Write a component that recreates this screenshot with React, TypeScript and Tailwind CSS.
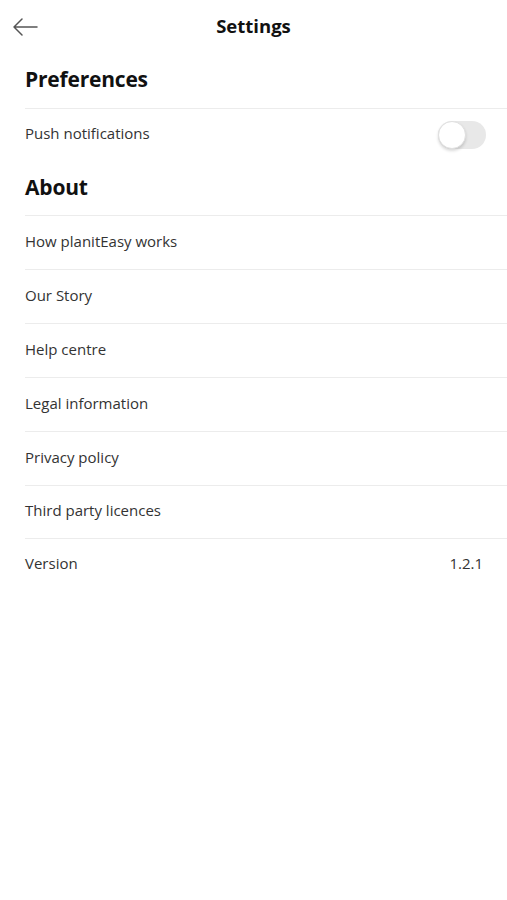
import React, { useState } from 'react';

const aboutItems = [
  'How planitEasy works',
  'Our Story',
  'Help centre',
  'Legal information',
  'Privacy policy',
  'Third party licences',
];

const Toggle = ({ on, onChange }: { on: boolean; onChange: () => void }) => (
  <button
    onClick={onChange}
    className={`relative w-[48px] h-[28px] rounded-full transition-colors ${on ? 'bg-[#4cd964]' : 'bg-[#e8e8e8]'}`}
  >
    <span
      className={`absolute top-0 w-[28px] h-[28px] rounded-full bg-white border border-[#e0e0e0] shadow-[0_2px_3px_rgba(0,0,0,0.15)] transition-all ${on ? 'left-[20px]' : 'left-0'}`}
    />
  </button>
);

export default function App() {
  const [push, setPush] = useState(false);

  return (
    <div className="min-h-screen bg-white text-[#333] font-['Open_Sans','Lato',sans-serif]">
      {/* Header */}
      <div className="relative h-[53px] flex items-center justify-center">
        <button className="absolute left-[12px] top-[16px] text-[#555]">
          <svg width="26" height="22" viewBox="0 0 26 22" fill="none" stroke="currentColor" strokeWidth="1.5" strokeLinecap="round" strokeLinejoin="round">
            <path d="M25 11H2M10 3l-8 8 8 8" />
          </svg>
        </button>
        <h1 className="text-[18.5px] font-bold text-[#111] pb-[2px]">Settings</h1>
      </div>

      <div className="pl-[25px]">
        <div className="h-[56px] flex items-center border-b border-[#ececec] pb-[2px]">
          <h2 className="text-[21px] font-bold text-[#111] tracking-[-0.2px]">Preferences</h2>
        </div>
        <div className="h-[51px] flex items-center justify-between pr-[21px]">
          <span className="text-[15px] pb-[2px]">Push notifications</span>
          <Toggle on={push} onChange={() => setPush(!push)} />
        </div>

        <div className="h-[56px] flex items-center border-b border-[#ececec]">
          <h2 className="text-[21px] font-bold text-[#111] tracking-[-0.2px]">About</h2>
        </div>
        {aboutItems.map((item, i) => (
          <div key={item} className={`${i < 4 ? 'h-[54px]' : 'h-[53.5px]'} flex items-center border-b border-[#ececec] pb-[3px]`}>
            <span className="text-[15px]">{item}</span>
          </div>
        ))}
        <div className="h-[51px] flex items-center justify-between pr-[24px] pb-[3px]">
          <span className="text-[15px]">Version</span>
          <span className="text-[15px]">1.2.1</span>
        </div>
      </div>
    </div>
  );
}
